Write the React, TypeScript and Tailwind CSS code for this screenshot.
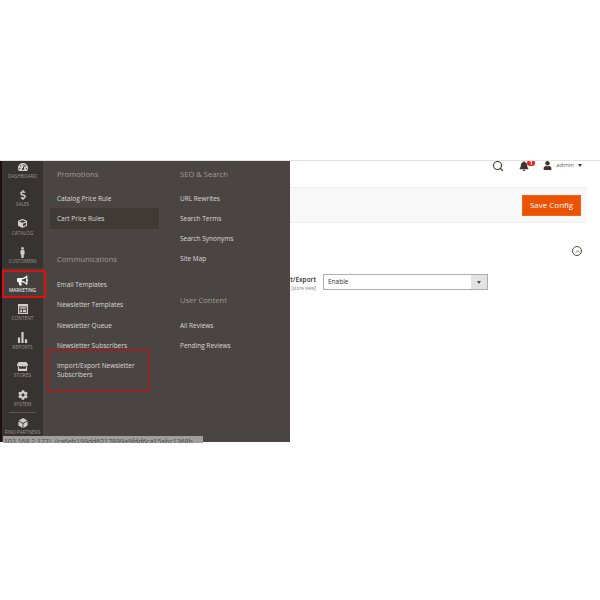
import { Search } from 'lucide-react';
import { FaBell, FaBullhorn, FaCog, FaCube, FaDollarSign, FaMale, FaStore, FaTachometerAlt, FaUser } from 'react-icons/fa';
import type { ReactNode } from 'react';

function ContentIcon() {
  return (
    <svg viewBox="0 0 12 12" className="h-[10px] w-[10px]" fill="currentColor">
      <path fillRule="evenodd" d="M0 0h12v12H0zM1.5 3v7.5h9V3zM2.5 4h7v1.8h-7zM2.5 6.8h2.5v2.7H2.5zM6 6.8h3.5v2.7H6z" />
    </svg>
  );
}

function BarsIcon() {
  return (
    <svg viewBox="0 0 12 12" className="h-[11px] w-[11px]" fill="currentColor">
      <path d="M1 6h2.4v6H1zM4.8 0h2.4v12H4.8zM8.6 8H11v4H8.6z" />
    </svg>
  );
}

function PartnersIcon() {
  return (
    <svg viewBox="0 0 12 12" className="h-[10px] w-[10px]" fill="currentColor">
      <path d="M6 0l5.2 3L6 6 .8 3zM.5 4l5 2.9V12l-5-3zM11.5 4l-5 2.9V12l5-3z" />
    </svg>
  );
}

const NAV_ITEMS: { label: string; icon: ReactNode }[] = [
  { label: 'DASHBOARD', icon: <FaTachometerAlt size={10} /> },
  { label: 'SALES', icon: <FaDollarSign size={10} /> },
  { label: 'CATALOG', icon: <FaCube size={9} /> },
  { label: 'CUSTOMERS', icon: <FaMale size={11} /> },
  { label: 'MARKETING', icon: <FaBullhorn size={11} /> },
  { label: 'CONTENT', icon: <ContentIcon /> },
  { label: 'REPORTS', icon: <BarsIcon /> },
  { label: 'STORES', icon: <FaStore size={11} /> },
  { label: 'SYSTEM', icon: <FaCog size={10} /> },
  { label: 'FIND PARTNERS', icon: <PartnersIcon /> },
];

function MenuLink({ children, active }: { children: ReactNode; active?: boolean }) {
  return (
    <div className={active ? '-ml-[7px] h-[20.3px] w-[109px] bg-[#3f3a36] pl-[7px] pt-[5.6px]' : 'min-h-[20.3px] pt-[5.6px]'}>
      <div className="text-[6.5px] leading-[9px] text-[#dcdad8]">{children}</div>
    </div>
  );
}

function MenuHeading({ children, className }: { children: ReactNode; className: string }) {
  return <div className={`text-[7.6px] leading-[12px] text-[#a09a95] ${className}`}>{children}</div>;
}

export default function App() {
  return (
    <div className="relative h-[600px] w-[600px] overflow-hidden bg-white font-['Open_Sans',sans-serif]">
      <div className="h-[160px]" />
      <div className="flex h-[282px] border-t border-[#e3e3e3]">
        {/* Admin nav rail */}
        <div className="w-[2px] shrink-0 bg-[#1a1014]" />
        <nav className="w-[41px] shrink-0 overflow-hidden bg-[#373330]">
          <div className="-mt-[7px]">
            {NAV_ITEMS.map(({ label, icon }) => (
              <div
                key={label}
                className={`flex h-[28.5px] flex-col items-center justify-end pb-[4px] ${
                  label === 'MARKETING' ? 'bg-[#45403d] text-white' : 'text-[#d0cdca]'
                }`}
              >
                {label === 'FIND PARTNERS' && <div className="mb-[4px] h-px w-[27px] shrink-0 bg-[#5e5955]" />}
                <div className="flex h-[12px] items-center">{icon}</div>
                <span className={`whitespace-nowrap text-[4.8px] leading-[6px] ${label === 'MARKETING' ? 'text-white' : 'text-[#9a9591]'}`}>
                  {label}
                </span>
              </div>
            ))}
          </div>
        </nav>

        {/* Marketing flyout */}
        <div className="flex w-[247px] shrink-0 bg-[#4a4542] pl-[14px]">
          <div className="w-[123px] shrink-0">
            <MenuHeading className="mb-[8px] mt-[7px]">Promotions</MenuHeading>
            <MenuLink>Catalog Price Rule</MenuLink>
            <MenuLink active>Cart Price Rules</MenuLink>
            <MenuHeading className="mb-[10px] mt-[24px]">Communications</MenuHeading>
            <MenuLink>Email Templates</MenuLink>
            <MenuLink>Newsletter Templates</MenuLink>
            <MenuLink>Newsletter Queue</MenuLink>
            <MenuLink>Newsletter Subscribers</MenuLink>
            <MenuLink>
              Import/Export Newsletter
              <br />
              Subscribers
            </MenuLink>
          </div>
          <div>
            <MenuHeading className="mb-[8px] mt-[7px]">SEO &amp; Search</MenuHeading>
            <MenuLink>URL Rewrites</MenuLink>
            <MenuLink>Search Terms</MenuLink>
            <MenuLink>Search Synonyms</MenuLink>
            <MenuLink>Site Map</MenuLink>
            <MenuHeading className="mb-[9px] mt-[25px]">User Content</MenuHeading>
            <MenuLink>All Reviews</MenuLink>
            <MenuLink>Pending Reviews</MenuLink>
          </div>
        </div>

        {/* Page behind the flyout */}
        <main className="min-w-0 flex-1 overflow-hidden">
          <div className="-mt-[2px] flex h-[28px] items-start justify-end pr-[18px] pt-px text-[#41362f]">
            <Search size={12} strokeWidth={2.2} className="mr-[15px]" />
            <div className="relative mr-[14px] mt-px">
              <FaBell size={10} />
              <span className="absolute -right-[6px] -top-px flex h-[6px] w-[8px] items-center justify-center rounded-full bg-[#e22626] text-[5px] font-bold leading-none text-white">
                1
              </span>
            </div>
            <FaUser size={9} className="mr-[4px] mt-px" />
            <span className="mt-px text-[6px] leading-[9px] text-[#676056]">admin</span>
            <span className="ml-[4px] mt-[4px] border-x-[2px] border-t-[3px] border-x-transparent border-t-[#41362f]" />
          </div>
          <div className="flex h-[36px] w-[297px] items-center justify-end border-y border-[#eeeeee] bg-[#f8f8f8] pr-[6px]">
            <button className="flex h-[21px] w-[59px] items-center justify-center border border-[#f26322] bg-[#eb5202] text-[8px] text-white">
              Save Config
            </button>
          </div>
          <div className="mr-[18px] mt-[23px] flex justify-end">
            <div className="flex h-[10px] w-[10px] items-center justify-center rounded-full border border-[#514943]">
              <svg viewBox="0 0 6 4" className="h-[3px] w-[5px]" fill="none" stroke="#514943" strokeWidth="1">
                <path d="M.5 3.5L3 1l2.5 2.5" />
              </svg>
            </div>
          </div>
          <div className="mt-[18px] flex items-start justify-end pr-[112px]">
            <div className="flex shrink-0 flex-col items-end pt-px">
              <span className="whitespace-nowrap text-[6.5px] font-semibold leading-[10px] text-[#303030]">t/Export</span>
              <span className="whitespace-nowrap text-[4.6px] leading-[6px] text-[#808080]">[store view]</span>
            </div>
            <div className="ml-[7px] flex h-[16px] w-[165px] shrink-0 border border-[#adadad]">
              <div className="flex-1 pl-[4px] text-[6.5px] leading-[14px] text-[#303030]">Enable</div>
              <div className="flex w-[16px] items-center justify-center bg-[#e3e3e3]">
                <span className="border-x-[2px] border-t-[3px] border-x-transparent border-t-[#514943]" />
              </div>
            </div>
          </div>
        </main>
      </div>

      {/* Browser status bar, cut off by the bottom of the capture */}
      <div className="absolute left-[3px] top-[436px] h-[7px] w-[200px] overflow-hidden whitespace-nowrap bg-[#a09f9b] pl-px pt-[2px] text-[6.9px] leading-[8px] text-[#4a4950]">
        103.168.2.177/_/ca6eb199dd6217899a9fdd6ca15abc1368b
      </div>

      {/* Red annotation boxes */}
      <div className="absolute left-[2px] top-[270px] h-[28px] w-[44px] border-2 border-[#dd1111]" />
      <div className="absolute left-[47px] top-[349px] h-[43px] w-[103px] border-2 border-[#8f2525]" />
    </div>
  );
}
